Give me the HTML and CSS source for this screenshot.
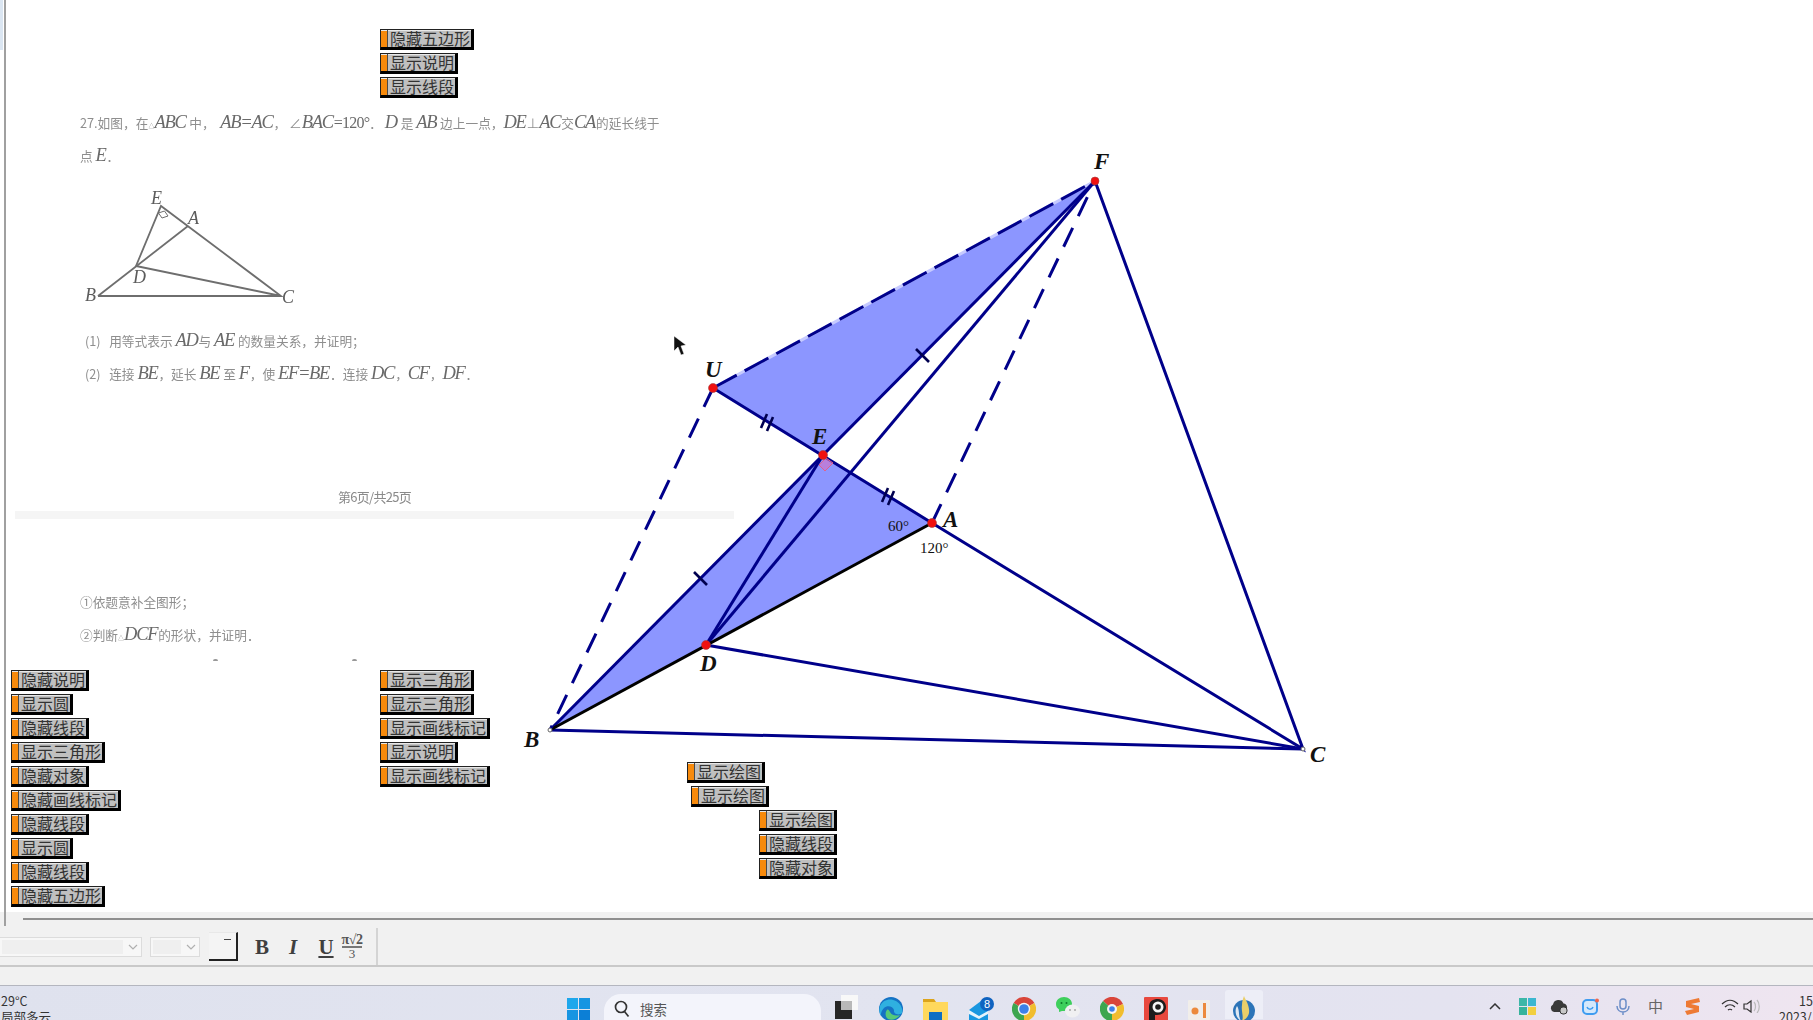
FILE: index.html
```html
<!DOCTYPE html>
<html lang="zh">
<head>
<meta charset="utf-8">
<title>几何画板</title>
<link rel="stylesheet" href="styles.css">
</head>
<body>
<div class="app">
  <main class="sketch">
    <span class="edge-tab"></span>
    <section class="doc">
      <p class="q"><span>27.如图，在</span><span class="tri">△</span><i>ABC</i><span> 中，&nbsp;&nbsp;</span><i>AB=AC</i><span>，&nbsp;∠</span><i>BAC</i><span class="num">=120°</span><span>． </span><i>D</i><span> 是 </span><i>AB</i><span> 边上一点，</span><i>DE</i><span>⊥</span><i>AC</i><span>交</span><i>CA</i><span>的延长线于</span></p>
      <p class="q"><span>点 </span><i>E</i><span>．</span></p>
      <svg class="fig" viewBox="0 0 300 152" width="300" height="152">
        <g class="fig-lines">
          <path d="M98 124H281L161 34L136 94L281 124"/>
          <path d="M98 124L188 54"/>
          <path class="thin" d="M158.500 41l6-2l3.500 5l-6 2z"/>
        </g>
        <g class="fig-labels">
          <text x="151" y="32">E</text>
          <text x="188" y="52">A</text>
          <text x="133" y="111">D</text>
          <text x="85" y="129">B</text>
          <text x="282" y="131">C</text>
        </g>
      </svg>
      <p class="q sub"><span>(1)&nbsp;&nbsp;&nbsp;用等式表示 </span><i>AD</i><span>与 </span><i>AE</i><span> 的数量关系，并证明；</span></p>
      <p class="q sub"><span>(2)&nbsp;&nbsp;&nbsp;连接 </span><i>BE</i><span>，延长 </span><i>BE</i><span> 至 </span><i>F</i><span>，使 </span><i>EF=BE</i><span>．连接 </span><i>DC</i><span>，</span><i>CF</i><span>，</span><i>DF</i><span>．</span></p>
      <p class="pageno">第6页/共25页</p>
      <div class="band"></div>
      <p class="q"><span>①依题意补全图形；</span></p>
      <p class="q"><span>②判断</span><span class="tri">△</span><i>DCF</i><span>的形状，并证明．</span></p>
      <div class="frags"><span class="frag"></span><span class="frag"></span></div>
    </section>

    <svg class="diagram" viewBox="0 0 1813 912" width="1813" height="912">
      <polygon class="fill" points="713,388 1095,181 823,455"/>
      <polygon class="fill" points="823,455 932,523 706,645 550,730"/>
      <path class="pale" d="M713 388L1095 181"/>
      <g class="navy">
        <path d="M713 388L932 523L1303 749L1095 181"/>
        <path d="M550 730L1095 181"/>
        <path d="M706 645L1095 181"/>
        <path d="M706 645L823 455"/>
        <path d="M706 645L1303 749"/>
        <path d="M550 730L1303 749"/>
      </g>
      <path class="blackline" d="M550 730L932 523"/>
      <g class="dash">
        <path class="long" d="M713 388L1095 181"/>
        <path d="M713 388L550 730"/>
        <path d="M932 523L1095 181"/>
      </g>
      <g class="ticks">
        <path d="M916 349L929 362"/>
        <path d="M694 572L707 585"/>
        <path d="M767 414L761 428M773 417L767 431"/>
        <path d="M888 488L882 502M894 491L888 505"/>
      </g>
      <polygon class="rightangle" points="819,465 825,471 833,463 826,458"/>
      <circle class="pt" cx="713" cy="388" r="4.500"/>
      <circle class="pt" cx="823" cy="455" r="4.500"/>
      <circle class="pt" cx="932" cy="523" r="4.500"/>
      <circle class="pt" cx="706" cy="645" r="4.500"/>
      <circle class="pt" cx="1095" cy="181" r="4"/>
      <circle class="pt-w" cx="550" cy="730" r="2"/>
      <circle class="pt-w" cx="1303" cy="749" r="2"/>
      <g class="labels">
        <text x="1094" y="169">F</text>
        <text x="705" y="377">U</text>
        <text x="812" y="444">E</text>
        <text x="943" y="527">A</text>
        <text x="700" y="671">D</text>
        <text x="524" y="747">B</text>
        <text x="1310" y="762">C</text>
      </g>
      <g class="angles">
        <text x="888" y="531">60°</text>
        <text x="920" y="553">120°</text>
      </g>
      <path class="cursor" d="M674 336L674 351L678 347L681 355L684 354L681 346L686 345Z"/>
    </svg>

    <div class="btns g-top">
      <div class="btn">隐藏五边形</div>
      <div class="btn">显示说明</div>
      <div class="btn">显示线段</div>
    </div>
    <div class="btns g-left">
      <div class="btn">隐藏说明</div>
      <div class="btn">显示圆</div>
      <div class="btn">隐藏线段</div>
      <div class="btn">显示三角形</div>
      <div class="btn">隐藏对象</div>
      <div class="btn">隐藏画线标记</div>
      <div class="btn">隐藏线段</div>
      <div class="btn">显示圆</div>
      <div class="btn">隐藏线段</div>
      <div class="btn">隐藏五边形</div>
    </div>
    <div class="btns g-right">
      <div class="btn">显示三角形</div>
      <div class="btn">显示三角形</div>
      <div class="btn">显示画线标记</div>
      <div class="btn">显示说明</div>
      <div class="btn">显示画线标记</div>
    </div>
    <div class="btns g-m1"><div class="btn">显示绘图</div></div>
    <div class="btns g-m2"><div class="btn">显示绘图</div></div>
    <div class="btns g-m3">
      <div class="btn">显示绘图</div>
      <div class="btn">隐藏线段</div>
      <div class="btn">隐藏对象</div>
    </div>
  </main>

  <div class="strip"><div class="strip-line"></div></div>

  <div class="toolbar">
    <div class="select s1"><span class="select-in"></span><svg class="chev" viewBox="0 0 10 6" width="10" height="6"><path d="M1 1l4 4l4-4"/></svg></div>
    <div class="select s2"><span class="select-in"></span><svg class="chev" viewBox="0 0 10 6" width="10" height="6"><path d="M1 1l4 4l4-4"/></svg></div>
    <div class="colorbox"><span class="colorbox-mark"></span></div>
    <b class="tool t-b">B</b>
    <i class="tool t-i">I</i>
    <u class="tool t-u">U</u>
    <div class="frac"><span class="frac-top">π√2</span><span class="frac-bot">3</span></div>
    <div class="sep"></div>
  </div>

  <div class="gap"></div>

  <footer class="taskbar">
    <div class="weather"><div>29°C</div><div>局部多云</div></div>
    <svg class="ic win" viewBox="0 0 23 23" width="23" height="23">
      <rect class="w1" width="11" height="11"/><rect class="w2" x="12" width="11" height="11"/><rect class="w2" y="12" width="11" height="11"/><rect class="w3" x="12" y="12" width="11" height="11"/>
    </svg>
    <div class="search">
      <svg viewBox="0 0 16 18" width="16" height="18"><circle class="lens" cx="7" cy="7" r="5.500"/><path class="lens" d="M10.500 11.500l4 5"/></svg>
      <span>搜索</span>
    </div>
    <svg class="ic tv" viewBox="0 0 24 24" width="24" height="24">
      <rect class="tv-b" x="0" y="6" width="17" height="18"/><rect class="tv-w" x="6" y="0" width="17" height="15"/><rect class="tv-o" x="6" y="6" width="11" height="9"/>
    </svg>
    <svg class="ic" viewBox="0 0 24 24" width="24" height="24">
      <circle class="edge-a" cx="12" cy="12" r="12"/>
      <path class="edge-b" d="M1 9C4 2 12 1 17 4C22 7 24 12 23 16C20 19 14 17 15 13C14 9 8 8 5 11C2 14 1 18 3 20C0 17 0 12 1 9Z"/>
      <path class="edge-c" d="M11 15C13 19 18 19 21 18C18 22 13 24 9 22C6 20 6 15 8 13C9 12 10 13 11 15Z"/>
    </svg>
    <svg class="ic" viewBox="0 0 25 24" width="25" height="24">
      <path class="fo-b" d="M0 2h11l2 3h12v4H0z"/><rect class="fo-a" y="5" width="25" height="19"/><rect class="fo-c" x="6" y="15" width="13" height="9"/>
    </svg>
    <svg class="ic mail" viewBox="0 0 26 26" width="26" height="26">
      <path class="ma-a" d="M1 13L13 4L20 8V26H1Z"/><path class="ma-w" d="M1 13L11 19L20 14V17L11 22L1 17Z"/>
      <circle class="ma-c" cx="19" cy="7" r="7"/><text class="ma-t" x="19" y="11">8</text>
    </svg>
    <svg class="ic chrome" viewBox="0 0 24 24" width="24" height="24">
      <path class="cr-r" d="M12 12L1.600 6A12 12 0 0 1 22.400 6Z"/><path class="cr-y" d="M12 12L22.400 6A12 12 0 0 1 12 24Z"/><path class="cr-g" d="M12 12L12 24A12 12 0 0 1 1.600 6Z"/>
      <circle class="cr-w" cx="12" cy="12" r="6.200"/><circle class="cr-b" cx="12" cy="12" r="4.800"/>
    </svg>
    <svg class="ic" viewBox="0 0 24 24" width="24" height="24">
      <path class="we-g" d="M8 0C3.500 0 0 3 0 7C0 9.500 1 11 3 12.500L3 15L6 14C10 14.500 16 12 16 7C16 3 12.500 0 8 0Z"/>
      <circle class="we-d" cx="5.500" cy="6" r="1"/><circle class="we-d" cx="10.500" cy="6" r="1"/>
      <ellipse class="we-w" cx="16.500" cy="14" rx="7.500" ry="6.500"/>
      <circle class="we-l" cx="14" cy="13" r="1"/><circle class="we-l" cx="19" cy="13" r="1"/>
    </svg>
    <svg class="ic" viewBox="0 0 24 24" width="24" height="24">
      <path class="cr-r" d="M12 12L3 4A12 12 0 0 1 23 7Z"/><path class="cr-y" d="M12 12L23 7A12 12 0 0 1 12 24Z"/><path class="cr-g" d="M12 12L12 24A12 12 0 0 1 3 4Z"/>
      <circle class="cr-w" cx="12" cy="12" r="5"/><circle class="cr-b" cx="12" cy="12" r="2.800"/>
    </svg>
    <svg class="ic" viewBox="0 0 24 24" width="24" height="24">
      <rect class="re-a" width="24" height="24" rx="1"/>
      <path class="re-k" d="M5 24V10C5 4 9 2 14 2C19 2 22 6 22 10C22 15 18 18 13 18H11V24Z"/>
      <circle class="re-w" cx="14" cy="10" r="5.500"/><circle class="re-k" cx="14" cy="10" r="2.800"/>
    </svg>
    <svg class="ic ap" viewBox="0 0 22 20" width="22" height="20">
      <rect class="ap-a" width="22" height="20" rx="1"/>
      <circle class="ap-o" cx="7" cy="11" r="3.500"/><rect class="ap-o" x="15" y="3" width="3" height="15"/>
    </svg>
    <div class="active-app">
      <svg viewBox="0 0 24 26" width="24" height="26">
        <ellipse class="gs-b" cx="12" cy="15" rx="11" ry="11"/>
        <path class="gs-y" d="M12 0C14 5 18 10 17 17C16 22 12 24 10 25C12 20 9 16 10 9C10 5 11 3 12 0Z"/>
        <path class="gs-w" d="M5 10C8 14 6 20 9 25C4 22 2 15 5 10Z"/>
      </svg>
    </div>
    <div class="tray">
      <svg class="t-caret" viewBox="0 0 12 7" width="12" height="7"><path d="M1 6l5-5l5 5"/></svg>
      <svg class="t-tile" viewBox="0 0 17 17" width="17" height="17"><rect class="tl1" width="8" height="8"/><rect class="tl2" x="9" width="8" height="8"/><rect class="tl3" y="9" width="8" height="8"/><rect class="tl4" x="9" y="9" width="8" height="8"/></svg>
      <svg class="t-cloud" viewBox="0 0 18 16" width="18" height="16"><path class="cl-a" d="M4 13A4 4 0 0 1 3 5.500A5.500 5.500 0 0 1 13.500 4.500A4 4 0 0 1 15 12L13 13Z"/><rect class="cl-b" x="10" y="8" width="7" height="7" rx="3"/></svg>
      <svg class="t-blue" viewBox="0 0 18 17" width="18" height="17"><rect class="bl-a" x="1" y="2" width="14" height="14" rx="4"/><path class="bl-m" d="M5 9c1 3 5 3 6 0"/><circle class="bl-r" cx="15" cy="2.500" r="2"/></svg>
      <svg class="t-mic" viewBox="0 0 14 18" width="14" height="18"><rect class="mic-a" x="4" y="1" width="6" height="10" rx="3"/><path class="mic-a" d="M1 8c0 8 12 8 12 0M7 14v3"/></svg>
      <span class="t-ime">中</span>
      <svg class="t-s" viewBox="0 0 17 17" width="17" height="17"><path class="s-a" d="M2 3L15 0L16 4L7 6L15 8L15 14L3 17L1 13L10 11L2 9Z"/></svg>
      <svg class="t-wifi" viewBox="0 0 18 14" width="18" height="14"><path class="wf" d="M1 5c5-5 11-5 16 0M4 8c3-3 7-3 10 0M7 11c1-1 3-1 4 0"/></svg>
      <svg class="t-vol" viewBox="0 0 18 14" width="18" height="14"><path class="wf" d="M1 5h3l4-3v11l-4-3H1z"/><path class="wf2" d="M11 3c2 2 2 7 0 9M14 1c3 3 3 10 0 13"/></svg>
      <div class="clock"><div class="time">15:22</div><div class="date">2023/</div></div>
    </div>
  </footer>
</div>
</body>
</html>
```

FILE: styles.css
```css
* { box-sizing: border-box; }
html, body { margin: 0; height: 100%; overflow: hidden; background: #fff; }
.app { width: 1813px; height: 1020px; display: flex; flex-direction: column; overflow: hidden; font-family: "Noto Sans CJK SC", "Noto Sans", sans-serif; }

.sketch { position: relative; height: 912px; flex: none; background: #fff; overflow: hidden; }
.sketch::before { content: ""; position: absolute; left: 4px; top: 0; bottom: 0; width: 2px; background: #a0a0a0; }
.edge-tab { position: absolute; left: 0; top: 0; width: 3px; height: 50px; background: #dbe6f2; }

.doc { position: absolute; inset: 0; padding-top: 106px; filter: blur(.35px); color: #8e8e8e; font-size: 12.700px; }
.doc p { margin: 0; }
.q { height: 33px; line-height: 33px; padding-left: 80px; white-space: nowrap; }
.q i { font: italic 18.500px "Liberation Serif", serif; color: #6a6a6a; letter-spacing: -1.300px; margin-right: 1px; }
.num { font: 16px "Liberation Serif", serif; letter-spacing: -.8px; color: #6a6a6a; }
.tri { font-size: 6px; }
.sub { padding-left: 85px; }
.fig { display: block; }
.fig-lines path { fill: none; stroke: #6e6e6e; stroke-width: 1.800; }
.fig-lines .thin { stroke-width: 1; }
.fig-labels text { font: italic 18px "Liberation Serif", serif; fill: #5c5c5c; }
.pageno { margin: 95px 0 0 338px !important; height: 26px; font: 13px/24px "Noto Sans CJK SC", serif; letter-spacing: -.7px; color: #8a8a8a; white-space: nowrap; }
.band { width: 719px; height: 8px; margin: 0 0 66px 15px; background: #f5f5f5; }
.frags { display: flex; gap: 134px; padding: 8px 0 0 213px; }
.frag { width: 5px; height: 2px; background: #999; border-radius: 3px 3px 0 0; }

.diagram { position: absolute; left: 0; top: 0; }
.fill { fill: #8c96ff; }
.pale { fill: none; stroke: #c6caff; stroke-width: 3; }
.navy path { fill: none; stroke: #00008a; stroke-width: 3; }
.blackline { fill: none; stroke: #000; stroke-width: 3; }
.dash path { fill: none; stroke: #00008a; stroke-width: 3; stroke-dasharray: 21 13; }
.dash .long { stroke-dasharray: 27 9; }
.ticks path { fill: none; stroke: #000050; stroke-width: 2.600; }
.rightangle { fill: rgba(220, 110, 190, .55); stroke: #e0608c; stroke-width: 1; }
.pt { fill: #f01010; stroke: #a04040; stroke-width: .6; }
.pt-w { fill: #fff; stroke: #666; stroke-width: 1; }
.labels text { font: italic bold 23px "Liberation Serif", serif; fill: #111; }
.angles text { font: 15px "Liberation Serif", serif; fill: #111; }
.cursor { fill: #111; stroke: #fff; stroke-width: .5; }

.btns { position: absolute; display: flex; flex-direction: column; align-items: flex-start; gap: 3px; }
.g-top { left: 380px; top: 29px; }
.g-left { left: 11px; top: 670px; }
.g-right { left: 380px; top: 670px; }
.g-m1 { left: 687px; top: 762px; }
.g-m2 { left: 691px; top: 786px; }
.g-m3 { left: 759px; top: 810px; }
.btn { height: 21px; padding: 0 1px 0 9px; position: relative; background: #c0c0c0; border: 1px solid #222; border-right: 3px solid #000; border-bottom: 3px solid #000; box-shadow: inset 0 1px 0 #e8e8e8, inset 6px 0 0 #f78a0c; font-size: 16px; line-height: 16px; color: #333; white-space: nowrap; }
.btn::after { content: ""; position: absolute; left: 6px; top: 0; bottom: 0; width: 1px; background: #4a4a4a; }

.strip { height: 16px; flex: none; padding: 6px 0 0 23px; background: linear-gradient(#a0a0a0, #a0a0a0) 4px 0 / 2px 14px no-repeat #f1f1f1; }
.strip-line { height: 2px; background: #8f8f8f; }

.toolbar { height: 39px; flex: none; background: #f1f1f1; border-bottom: 2px solid #c9c9c9; display: flex; align-items: center; }
.select { height: 20px; background: #f7f7f7; border: 1px solid #dcdcdc; display: flex; align-items: center; padding: 2px; gap: 5px; }
.s1 { width: 142px; border-left: 0; }
.s2 { width: 50px; margin-left: 8px; }
.select-in { flex: 1; height: 100%; background: #efefef; }
.chev { flex: none; margin-right: 1px; }
.chev path { fill: none; stroke: #b0b0b0; stroke-width: 1.200; }
.colorbox { width: 29px; height: 29px; margin-left: 9px; border-right: 2px solid #222; border-bottom: 2px solid #222; border-top: 1px solid #e8e8e8; position: relative; background: #f4f4f4; }
.colorbox-mark { position: absolute; right: 5px; top: 6px; width: 7px; height: 1px; background: #444; }
.tool { font-family: "Liberation Serif", serif; font-size: 21px; line-height: 24px; color: #3f3f3f; width: 16px; text-align: center; }
.t-b { margin-left: 16px; font-weight: 700; }
.t-i { margin-left: 15px; font-weight: 700; }
.t-u { margin-left: 17px; font-weight: 700; }
.frac { margin-left: 6px; width: 24px; display: flex; flex-direction: column; align-items: center; font-family: "Liberation Serif", serif; color: #555; line-height: 12px; }
.frac-top { font-size: 14px; font-weight: 700; border-bottom: 2px solid #777; white-space: nowrap; letter-spacing: -.5px; }
.frac-bot { font-size: 13px; }
.sep { width: 2px; height: 37px; margin-left: 12px; background: #d4d4d4; }

.gap { height: 19px; flex: none; background: #f1f1f1; border-bottom: 1px solid #b4b6bf; }

.taskbar { flex: 1; min-height: 0; position: relative; overflow: hidden; background: linear-gradient(90deg, #dfe2ee 0%, #e2e4f0 50%, #e4e3f0 80%, #efe5f0 100%); display: flex; align-items: flex-start; }
.weather { width: 567px; flex: none; padding: 7px 0 0 1px; font-size: 12.500px; line-height: 16px; color: #333; }
.ic { flex: none; margin-top: 11px; }
.win { margin-top: 12px; }
.w1 { fill: #1ea7ec; } .w2 { fill: #1795e2; } .w3 { fill: #0c7fd6; }
.search { flex: none; width: 217px; height: 34px; margin: 8px 0 0 14px; border-radius: 17px 17px 0 0; background: #f3f4fb; display: flex; align-items: center; padding: 0 0 4px 10px; gap: 10px; font-size: 13.500px; color: #555; }
.lens { fill: none; stroke: #333; stroke-width: 1.700; }
.tv { margin-left: 14px; margin-top: 9px; }
.tv-b { fill: #262626; } .tv-w { fill: #f8f8f8; } .tv-o { fill: #b8b8b8; }
.tv + .ic { margin-left: 21px; }
.ic + .ic { margin-left: 20px; }
.mail + .chrome { margin-left: 18px; }
.edge-a { fill: #1572c4; } .edge-b { fill: #2fb0e0; } .edge-c { fill: #55c97a; }
.fo-a { fill: #ffd85c; } .fo-b { fill: #dca41c; } .fo-c { fill: #0d6ec4; }
.ma-a { fill: #1a97e0; } .ma-w { fill: #e6f4fc; } .ma-c { fill: #0f63c0; }
.ma-t { font: 11px "Liberation Sans", sans-serif; fill: #fff; text-anchor: middle; }
.cr-r { fill: #d9453a; } .cr-y { fill: #f1bd2e; } .cr-g { fill: #3da64f; } .cr-w { fill: #f4f4f4; } .cr-b { fill: #3d80e8; }
.we-g { fill: #3ecf5c; } .we-d { fill: #0d7a2a; } .we-w { fill: #f0f0f2; } .we-l { fill: #a8a8a8; }
.re-a { fill: #e8483e; } .re-k { fill: #1c1c1c; } .re-w { fill: #f4f4f4; }
.ap { margin-top: 14px; margin-left: 20px !important; }
.ap-a { fill: #f1eeea; } .ap-o { fill: #ec8a3c; }
.active-app { flex: none; width: 38px; height: 29px; margin: 4px 0 0 15px; background: #edeef7; border-radius: 3px 3px 0 0; display: flex; justify-content: center; padding-top: 6px; }
.gs-b { fill: #2c74b8; } .gs-y { fill: #e9cf6a; } .gs-w { fill: #dfe8f2; }

.tray { flex: none; margin-left: 226px; height: 33px; display: flex; align-items: flex-start; position: relative; }
.t-caret { margin-top: 17px; flex: none; }
.t-caret path { fill: none; stroke: #333; stroke-width: 1.500; }
.t-tile { margin: 12px 0 0 18px; flex: none; }
.tl1 { fill: #3cb7a8; } .tl2 { fill: #3cb7d0; } .tl3 { fill: #36b39c; } .tl4 { fill: #f2cf40; }
.t-cloud { margin: 13px 0 0 14px; flex: none; }
.cl-a { fill: #3a3a3a; } .cl-b { fill: #c8c8c8; stroke: #333; }
.t-blue { margin: 12px 0 0 14px; flex: none; }
.bl-a { fill: #d4e8fb; stroke: #3e9cf0; stroke-width: 2; } .bl-m { fill: none; stroke: #3e9cf0; stroke-width: 1.500; } .bl-r { fill: #f0664c; }
.t-mic { margin: 12px 0 0 16px; flex: none; }
.mic-a { fill: none; stroke: #6d8ec8; stroke-width: 1.500; }
.t-ime { margin: 9px 0 0 18px; font-size: 15px; line-height: 22px; color: #666; flex: none; }
.t-s { margin: 12px 0 0 21px; flex: none; }
.s-a { fill: #ee7a34; }
.t-wifi { margin: 13px 0 0 20px; flex: none; }
.wf { fill: none; stroke: #333; stroke-width: 1.200; }
.wf2 { fill: none; stroke: #bbb; stroke-width: 1.200; }
.t-vol { margin: 13px 0 0 4px; flex: none; }
.clock { position: absolute; left: 290px; top: 7px; width: 60px; font-size: 12.500px; line-height: 16px; color: #333; text-align: left; white-space: nowrap; }
.time { padding-left: 20px; }
```
